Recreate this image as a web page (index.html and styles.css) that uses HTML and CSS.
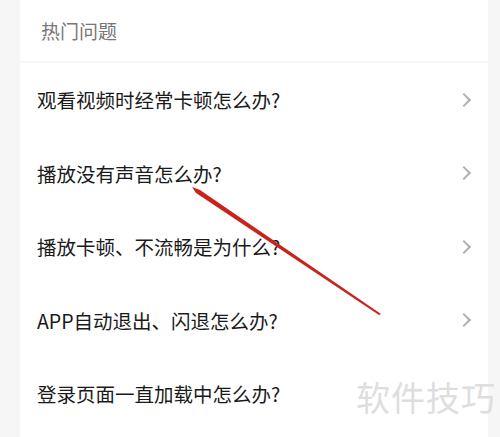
FILE: index.html
```html
<!DOCTYPE html>
<html lang="zh-CN">
<head>
    <meta charset="UTF-8">
    <meta name="viewport" content="width=device-width, initial-scale=1.0">
    <title>热门问题</title>
    <link rel="stylesheet" href="styles.css">
</head>
<body>
    <div class="faq">
        <div class="faq-header">热门问题</div>
        <ul class="faq-list">
            <li class="faq-item"><span>观看视频时经常卡顿怎么办?</span><i class="chevron"></i></li>
            <li class="faq-item"><span>播放没有声音怎么办?</span><i class="chevron"></i></li>
            <li class="faq-item"><span>播放卡顿、不流畅是为什么?</span><i class="chevron"></i></li>
            <li class="faq-item"><span>APP自动退出、闪退怎么办?</span><i class="chevron"></i></li>
            <li class="faq-item"><span>登录页面一直加载中怎么办?</span></li>
        </ul>
    </div>

    <!-- annotation arrow -->
    <svg class="arrow" width="500" height="437" viewBox="0 0 500 437">
        <polygon points="192,187 200,190 381,314 379,315 196,193" fill="#c8231c"/>
    </svg>

    <div class="watermark">软件技巧</div>
</body>
</html>
```

FILE: styles.css
```css
body {
    font-family: "Noto Sans CJK SC", "Noto Sans", sans-serif;
    background-color: #f6f6f6;
    margin: 0;
    padding: 0;
    width: 500px;
    height: 437px;
    overflow: hidden;
    position: relative;
}

.faq {
    margin-left: 20px;
    width: 468px;
}

.faq-header {
    background-color: #fff;
    height: 61px;
    line-height: 61px;
    padding-left: 21px;
    font-size: 19px;
    color: #777;
    margin-bottom: 2px;
}

.faq-list {
    list-style: none;
    margin: 0;
    padding: 0;
    background-color: #fff;
    min-height: 380px;
}

.faq-item {
    height: 73.5px;
    display: flex;
    align-items: center;
    justify-content: space-between;
    padding: 0 19px 0 17px;
    font-size: 19.5px;
    color: #1a1a1a;
}

.chevron {
    width: 8px;
    height: 8px;
    border-top: 2px solid #b0b0b0;
    border-right: 2px solid #b0b0b0;
    transform: rotate(45deg);
}

.arrow {
    position: absolute;
    left: 0;
    top: 0;
}

.watermark {
    position: absolute;
    left: 356px;
    top: 372px;
    font-size: 34px;
    color: #dedede;
    letter-spacing: 1px;
}
```
